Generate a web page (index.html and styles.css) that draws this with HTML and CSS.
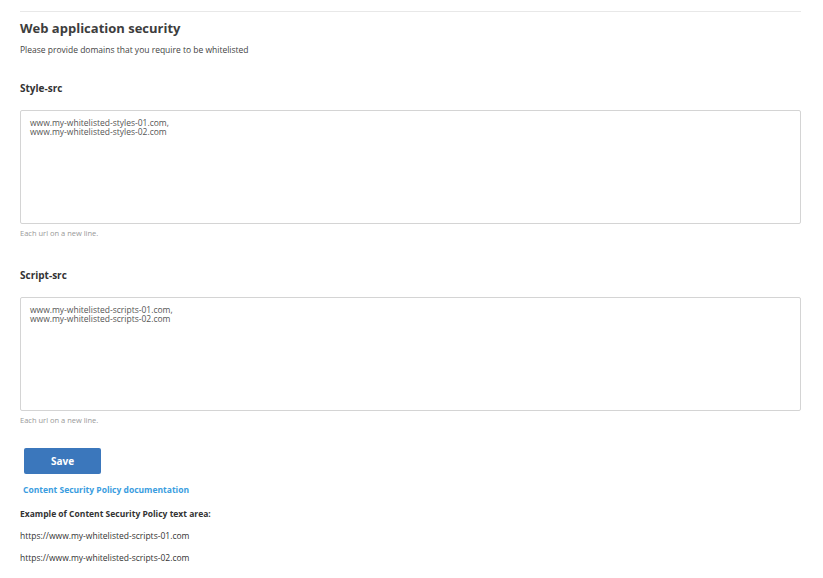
FILE: index.html
```html
<!DOCTYPE html>
<html lang="en">
<head>
<meta charset="utf-8">
<title>Web application security</title>
<link rel="stylesheet" href="styles.css">
</head>
<body>
<div class="page">
  <hr class="rule">
  <h1 class="title">Web application security</h1>
  <p class="subtitle">Please provide domains that you require to be whitelisted</p>

  <section class="field field-first">
    <h2 class="label">Style-src</h2>
    <textarea class="area">www.my-whitelisted-styles-01.com,
www.my-whitelisted-styles-02.com</textarea>
    <p class="hint">Each url on a new line.</p>
  </section>

  <section class="field">
    <h2 class="label">Script-src</h2>
    <textarea class="area">www.my-whitelisted-scripts-01.com,
www.my-whitelisted-scripts-02.com</textarea>
    <p class="hint">Each url on a new line.</p>
  </section>

  <button class="save" type="button">Save</button>
  <a class="doc-link" href="#">Content Security Policy documentation</a>
  <p class="example-title">Example of Content Security Policy text area:</p>
  <p class="example">https://www.my-whitelisted-scripts-01.com</p>
  <p class="example">https://www.my-whitelisted-scripts-02.com</p>
</div>
</body>
</html>
```

FILE: styles.css
```css
* { box-sizing: border-box; }
html, body { margin: 0; padding: 0; background: #ffffff; }
body {
  font-family: "Open Sans", "Noto Sans", sans-serif;
  color: #333333;
}
.page {
  padding: 11px 22px 0 20px;
  display: flex;
  flex-direction: column;
  align-items: flex-start;
}
.rule {
  width: 100%;
  margin: 0;
  border: 0;
  border-top: 1px solid #e8e8e8;
}
.title {
  margin: 7px 0 0;
  font-size: 13px;
  line-height: 18px;
  font-weight: 700;
  color: #3d3d3d;
}
.subtitle {
  margin: 7px 0 0;
  font-size: 8.5px;
  line-height: 11px;
  color: #444;
}
.field { width: 100%; display: flex; flex-direction: column; }
.field-first { margin-top: 26px; }
.field + .field { margin-top: 30px; }
.label {
  margin: 0;
  font-size: 10px;
  line-height: 14px;
  font-weight: 700;
  color: #333;
}
.area {
  margin-top: 15px;
  width: 100%;
  height: 114px;
  border: 1px solid #d4d4d4;
  border-radius: 2px;
  padding: 7px 9px;
  font-family: "Open Sans", "Noto Sans", sans-serif;
  font-size: 8.5px;
  line-height: 9px;
  color: #555;
  resize: none;
  background: #fff;
}
.hint {
  margin: 4px 0 0;
  font-size: 7.5px;
  line-height: 10px;
  color: #999;
}
.save {
  margin: 23px 0 0 4px;
  width: 77px;
  height: 26px;
  border: 0;
  border-radius: 2px;
  background: #3b77bc;
  color: #fff;
  font-family: "Open Sans", "Noto Sans", sans-serif;
  font-weight: 700;
  font-size: 10px;
  padding: 0;
}
.doc-link {
  margin: 10px 0 0 3px;
  font-size: 8.5px;
  line-height: 11px;
  font-weight: 700;
  color: #3a9de0;
  text-decoration: none;
}
.example-title {
  margin: 13px 0 0;
  font-size: 8.5px;
  line-height: 11px;
  font-weight: 700;
  color: #333;
}
.example {
  margin: 11px 0 0;
  font-size: 8.5px;
  line-height: 11px;
  color: #333;
}
```
